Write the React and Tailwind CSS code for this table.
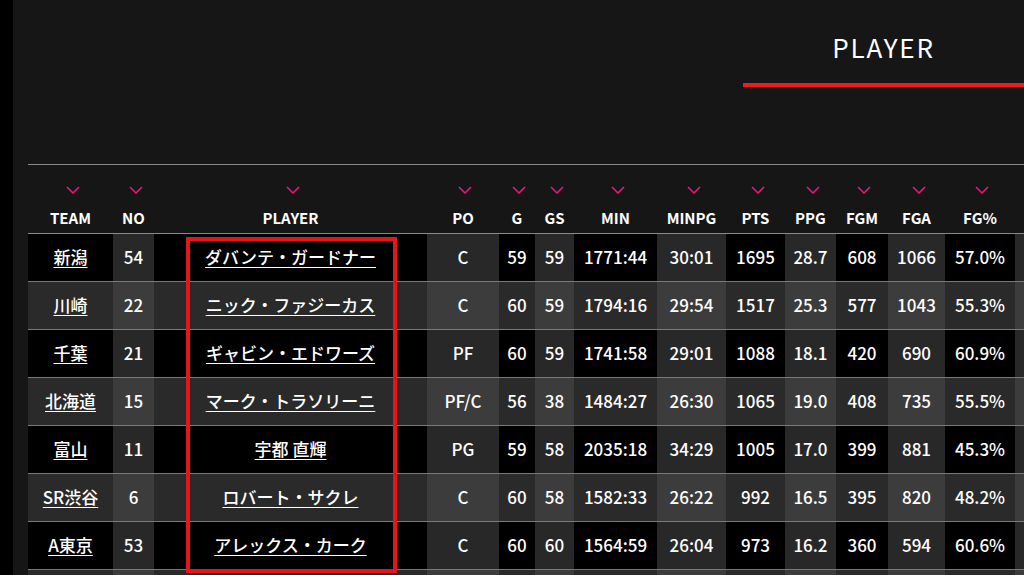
import React from 'react';

const columnas = [
  { label: 'TEAM', w: 'w-[85px]' },
  { label: 'NO', w: 'w-[41px]' },
  { label: 'PLAYER', w: 'w-[273px]' },
  { label: 'PO', w: 'w-[72px]' },
  { label: 'G', w: 'w-[36px]' },
  { label: 'GS', w: 'w-[39px]' },
  { label: 'MIN', w: 'w-[83px]' },
  { label: 'MINPG', w: 'w-[69px]' },
  { label: 'PTS', w: 'w-[59px]' },
  { label: 'PPG', w: 'w-[51px]' },
  { label: 'FGM', w: 'w-[52px]' },
  { label: 'FGA', w: 'w-[57px]' },
  { label: 'FG%', w: 'w-[70px]' },
  { label: '', w: 'w-[64px]' }, // columna siguiente, fuera de la vista
];

const jugadores = [
  ['新潟', '54', 'ダバンテ・ガードナー', 'C', '59', '59', '1771:44', '30:01', '1695', '28.7', '608', '1066', '57.0%'],
  ['川崎', '22', 'ニック・ファジーカス', 'C', '60', '59', '1794:16', '29:54', '1517', '25.3', '577', '1043', '55.3%'],
  ['千葉', '21', 'ギャビン・エドワーズ', 'PF', '60', '59', '1741:58', '29:01', '1088', '18.1', '420', '690', '60.9%'],
  ['北海道', '15', 'マーク・トラソリーニ', 'PF/C', '56', '38', '1484:27', '26:30', '1065', '19.0', '408', '735', '55.5%'],
  ['富山', '11', '宇都 直輝', 'PG', '59', '58', '2035:18', '34:29', '1005', '17.0', '399', '881', '45.3%'],
  ['SR渋谷', '6', 'ロバート・サクレ', 'C', '60', '58', '1582:33', '26:22', '992', '16.5', '395', '820', '48.2%'],
  ['A東京', '53', 'アレックス・カーク', 'C', '60', '60', '1564:59', '26:04', '973', '16.2', '360', '594', '60.6%'],
  ['', '', '', '', '', '', '', '', '', '', '', '', ''],
];

// Sombreado alterno por fila y columna
const fondoCelda = (fila, col) => {
  const filaOscura = fila % 2 === 0;
  const colClara = col % 2 === 1;
  if (filaOscura) return colClara ? 'bg-[#282828]' : 'bg-black';
  return colClara ? 'bg-[#3c3c3c]' : 'bg-[#2a2a2a]';
};

const Flecha = () => (
  <svg width="14" height="8" viewBox="0 0 14 8" className="ml-[4px]">
    <path d="M1 1 L7 7 L13 1" stroke="#e5197d" strokeWidth="1.6" fill="none" />
  </svg>
);

const App = () => {
  return (
    <div className="flex h-[575px] w-[1024px] overflow-hidden bg-black font-['Noto_Sans_CJK_JP',sans-serif] text-white">
      <div className="w-[13px] shrink-0 bg-black" />

      <div className="relative flex-1 overflow-hidden bg-[#161616]">
        {/* Pestaña de título */}
        <div className="flex justify-end">
          <div className="flex h-[87px] w-[281px] justify-center border-b-4 border-[#ee1c24] pt-[32px]">
            <span className="text-[26px] leading-[30px] font-normal tracking-[0.07em]">PLAYER</span>
          </div>
        </div>

        {/* Tabla */}
        <div className="mt-[77px] pl-[15px]">
          <div className="w-max border-t border-[#8a8a8a]">
            {/* Cabecera */}
            <div className="flex h-[69px] border-b border-[#8a8a8a]">
              {columnas.map((c, j) => (
                <div key={j} className={`${c.w} flex shrink-0 flex-col items-center pt-[21px]`}>
                  {c.label && <Flecha />}
                  <span className="mt-[14px] text-[15px] leading-[20px] font-bold">{c.label}</span>
                </div>
              ))}
            </div>

            {/* Filas */}
            {jugadores.map((fila, i) => (
              <div key={i} className="flex h-[48px] border-b border-[#7a7a7a]">
                {columnas.map((c, j) => {
                  const valor = fila[j] ?? '';
                  const enlace = j === 0 || j === 2;
                  return (
                    <div
                      key={j}
                      className={`${c.w} ${fondoCelda(i, j)} flex shrink-0 items-center justify-center pb-[1px] text-[17px] font-medium`}
                    >
                      {enlace ? (
                        <span className="underline decoration-1 underline-offset-[3px]">{valor}</span>
                      ) : (
                        valor
                      )}
                    </div>
                  );
                })}
              </div>
            ))}
          </div>
        </div>

        {/* Recuadro rojo de anotación */}
        <div className="pointer-events-none absolute top-[237px] left-[173px] h-[336px] w-[211px] border-4 border-[#e8141c]" />
      </div>
    </div>
  );
};

export default App;
